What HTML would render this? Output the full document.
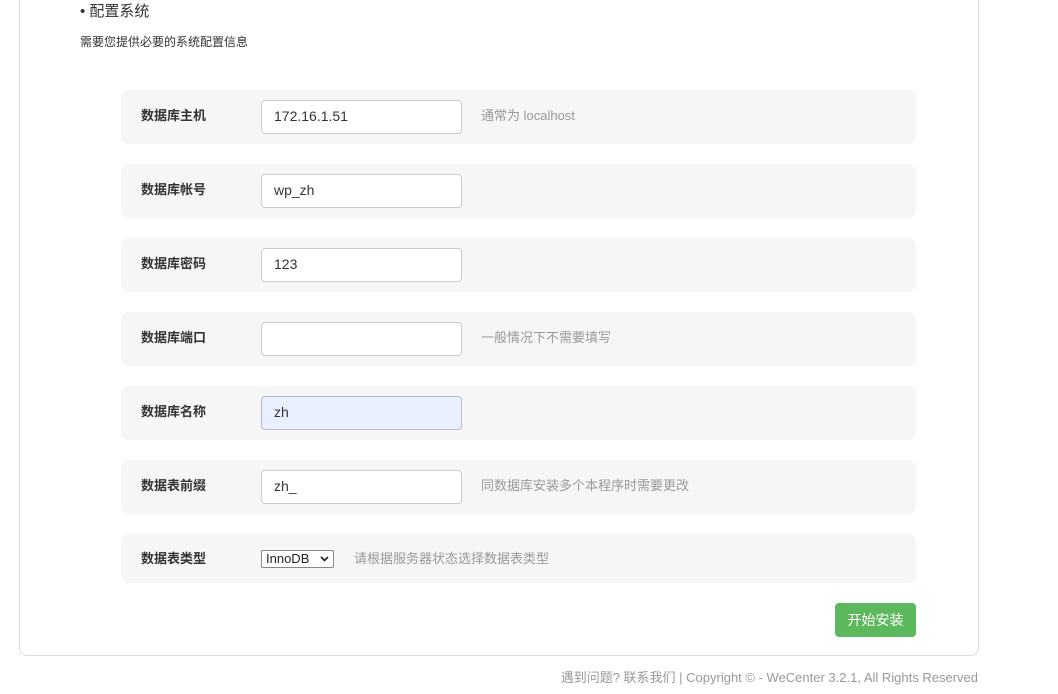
<!DOCTYPE html>
<html><head><meta charset="utf-8"><style>
body{margin:0;width:1058px;height:694px;background:#fff;font-family:"Liberation Sans","Noto Sans CJK SC",sans-serif;position:relative;overflow:hidden}
.panel{position:absolute;left:19px;top:-10px;width:960px;height:666px;border:1px solid #ddd;border-radius:8px;box-sizing:border-box}
.a{position:absolute}
.row{position:absolute;left:121px;width:795px;height:54px;background:#f6f6f6;border-radius:8px}
.lab{position:absolute;left:20px;top:0;line-height:52px;font-size:13px;font-weight:bold;color:#333}
.inp{position:absolute;left:140px;top:10px;width:201px;height:34px;box-sizing:border-box;border:1px solid #ccc;border-radius:4px;background:#fff;font-size:14px;color:#333;padding-left:12px;line-height:31px}
.hint{position:absolute;left:360px;top:0;line-height:52px;font-size:13px;color:#999}
</style></head><body>
<div class="panel"></div>
<div class="a" style="left:80px;top:0px;font-size:15px;color:#333">• 配置系统</div>
<div class="a" style="left:80px;top:33px;font-size:12px;color:#333">需要您提供必要的系统配置信息</div>

<div class="row" style="top:90px"><div class="lab">数据库主机</div><div class="inp">172.16.1.51</div><div class="hint">通常为 localhost</div></div>
<div class="row" style="top:164px"><div class="lab">数据库帐号</div><div class="inp">wp_zh</div></div>
<div class="row" style="top:238px"><div class="lab">数据库密码</div><div class="inp">123</div></div>
<div class="row" style="top:312px"><div class="lab">数据库端口</div><div class="inp"></div><div class="hint">一般情况下不需要填写</div></div>
<div class="row" style="top:386px"><div class="lab">数据库名称</div><div class="inp" style="background:#e8f0fe;border-color:#bbc">zh</div></div>
<div class="row" style="top:460px"><div class="lab">数据表前缀</div><div class="inp">zh_</div><div class="hint">同数据库安装多个本程序时需要更改</div></div>
<div class="row" style="top:534px;height:49px"><div class="lab" style="line-height:49px">数据表类型</div>
<div class="a" style="left:140px;top:16px;width:73px;height:18px;box-sizing:border-box;border:1px solid #888;border-radius:2px;background:#fff;font-size:13px;color:#222;line-height:16px;padding-left:4px">InnoDB<svg style="position:absolute;right:4px;top:5px" width="9" height="6" viewBox="0 0 9 6"><path d="M1 1l3.5 3.5L8 1" stroke="#222" stroke-width="1.6" fill="none"/></svg></div>
<div class="hint" style="left:233px;line-height:49px">请根据服务器状态选择数据表类型</div></div>

<div class="a" style="left:835px;top:603px;width:81px;height:34px;background:#5cb85c;border-radius:4px;color:#fff;font-size:14px;line-height:34px;text-align:center">开始安装</div>
<div class="a" style="right:80px;top:667px;font-size:13px;color:#999">遇到问题? 联系我们 | Copyright © - WeCenter 3.2.1, All Rights Reserved</div>
</body></html>
